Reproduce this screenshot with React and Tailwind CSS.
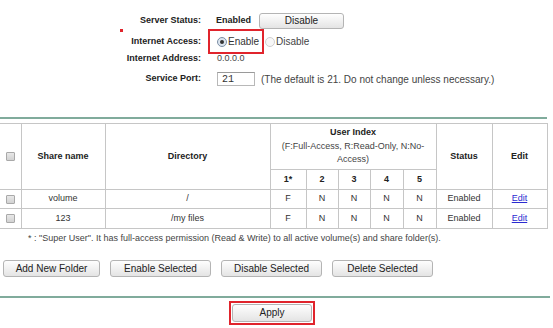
const COLS = [21, 84, 165, 36, 32, 32, 33, 33, 56, 55];

const ROWS = [
  { name: 'volume', dir: '/', users: ['F', 'N', 'N', 'N', 'N'], status: 'Enabled' },
  { name: '123', dir: '/my files', users: ['F', 'N', 'N', 'N', 'N'], status: 'Enabled' },
];

const Btn = ({ children, className = '' }) => (
  <button
    className={`flex items-center justify-center border border-[#b4b4b4] rounded-[3px] bg-gradient-to-b from-[#fefefe] to-[#e4e4e4] text-[10px] text-[#222] leading-none ${className}`}
  >
    {children}
  </button>
);

const Check = () => (
  <div className="mx-auto w-[9px] h-[9px] border border-[#a9a9a9] rounded-[1px] bg-gradient-to-b from-[#e8e8e8] to-[#d2d2d2]" />
);

const Radio = ({ on }) => (
  <div
    className={`w-[10px] h-[10px] rounded-full border flex items-center justify-center ${
      on ? 'border-[#7d8fa6] bg-[#dbe4ee]' : 'border-[#cfcfcf] bg-[#f7f7f7]'
    }`}
  >
    {on && <div className="w-[4px] h-[4px] rounded-full bg-[#333]" />}
  </div>
);

const Label = ({ children }) => (
  <div className="w-[201px] shrink-0 text-right font-bold text-[9px] text-[#222]">{children}</div>
);

export default function App() {
  const cell = 'border border-[#c6c6c6] text-center p-0';
  return (
    <div className="w-[553px] h-[328px] overflow-hidden bg-white font-['Liberation_Sans',Arial,sans-serif] text-[#333]">
      <div className="pt-[13px]">
        <div className="flex items-center h-[16px]">
          <Label>Server Status:</Label>
          <div className="ml-[15px] font-bold text-[9px] text-[#222]">Enabled</div>
          <Btn className="ml-[8px] w-[85px] h-[16px]">Disable</Btn>
        </div>

        <div className="relative flex items-center h-[25px]">
          <div className="absolute left-[120px] top-0 w-[3px] h-[3px] bg-[#e0242c]" />
          <Label>Internet Access:</Label>
          <div className="ml-[7px] flex items-center h-[25px] w-[56px] border-2 border-[#e0242c] pl-[7px]">
            <Radio on />
            <span className="ml-[1px] text-[10px] text-[#333]">Enable</span>
          </div>
          <div className="ml-[1px]">
            <Radio />
          </div>
          <span className="ml-[1px] text-[10px] text-[#444]">Disable</span>
        </div>

        <div className="flex items-center h-[10px]">
          <Label>Internet Address:</Label>
          <div className="ml-[16px] text-[9px] text-[#444]">0.0.0.0</div>
        </div>

        <div className="flex items-center h-[14px] mt-[8px]">
          <Label>Service Port:</Label>
          <div className="ml-[16px] w-[38px] h-[14px] border border-[#b8b8b8] border-t-[#9a9a9a] bg-white flex items-center pl-[4px] font-['Liberation_Mono',monospace] text-[10px] text-[#333]">
            21
          </div>
          <div className="ml-[6px] text-[10px] text-[#444]">
            (The default is 21. Do not change unless necessary.)
          </div>
        </div>
      </div>

      <div className="mt-[31px] w-[547px] h-[2px] bg-[#80ab9c]" />

      <table className="mt-[4px] border-collapse table-fixed w-[547px] text-[9px]">
        <colgroup>
          {COLS.map((w, i) => (
            <col key={i} style={{ width: w }} />
          ))}
        </colgroup>
        <thead>
          <tr className="h-[46px]">
            <th rowSpan={2} className={`${cell} border-l-0`}>
              <Check />
            </th>
            <th rowSpan={2} className={`${cell} font-bold text-[#222]`}>Share name</th>
            <th rowSpan={2} className={`${cell} font-bold text-[#222]`}>Directory</th>
            <th colSpan={5} className={`${cell} leading-[13.5px]`}>
              <div className="font-bold text-[#222]">User Index</div>
              <div className="font-normal text-[#444]">
                (F:Full-Access, R:Read-Only, N:No-
                <br />
                Access)
              </div>
            </th>
            <th rowSpan={2} className={`${cell} font-bold text-[#222]`}>Status</th>
            <th rowSpan={2} className={`${cell} font-bold text-[#222]`}>Edit</th>
          </tr>
          <tr className="h-[20px]">
            {['1*', '2', '3', '4', '5'].map((u) => (
              <th key={u} className={`${cell} font-bold text-[#222]`}>{u}</th>
            ))}
          </tr>
        </thead>
        <tbody>
          {ROWS.map((r, i) => (
            <tr key={r.name} className={i === 0 ? 'h-[19px]' : 'h-[20px]'}>
              <td className={`${cell} border-l-0`}>
                <Check />
              </td>
              <td className={cell}>{r.name}</td>
              <td className={cell}>{r.dir}</td>
              {r.users.map((u, j) => (
                <td key={j} className={cell}>{u}</td>
              ))}
              <td className={cell}>{r.status}</td>
              <td className={cell}>
                <a href="#" className="text-[#2b2bd0] underline">Edit</a>
              </td>
            </tr>
          ))}
        </tbody>
      </table>

      <div className="mt-[4px] pl-[28px] text-[9px] leading-[11px] text-[#444]">
        * : "Super User". It has full-access permission (Read &amp; Write) to all active volume(s) and share folder(s).
      </div>

      <div className="mt-[16px] flex gap-[10px] pl-[3px]">
        <Btn className="w-[97px] h-[17px]">Add New Folder</Btn>
        <Btn className="w-[101px] h-[17px]">Enable Selected</Btn>
        <Btn className="w-[101px] h-[17px]">Disable Selected</Btn>
        <Btn className="w-[101px] h-[17px]">Delete Selected</Btn>
      </div>

      <div className="mt-[19px] w-[550px] h-[2px] bg-[#80ab9c]" />

      <div className="mt-[3px] flex justify-center pr-[9px]">
        <div className="w-[86px] h-[24px] border-2 border-[#e0242c] p-[1px]">
          <Btn className="w-full h-full">Apply</Btn>
        </div>
      </div>
    </div>
  );
}
